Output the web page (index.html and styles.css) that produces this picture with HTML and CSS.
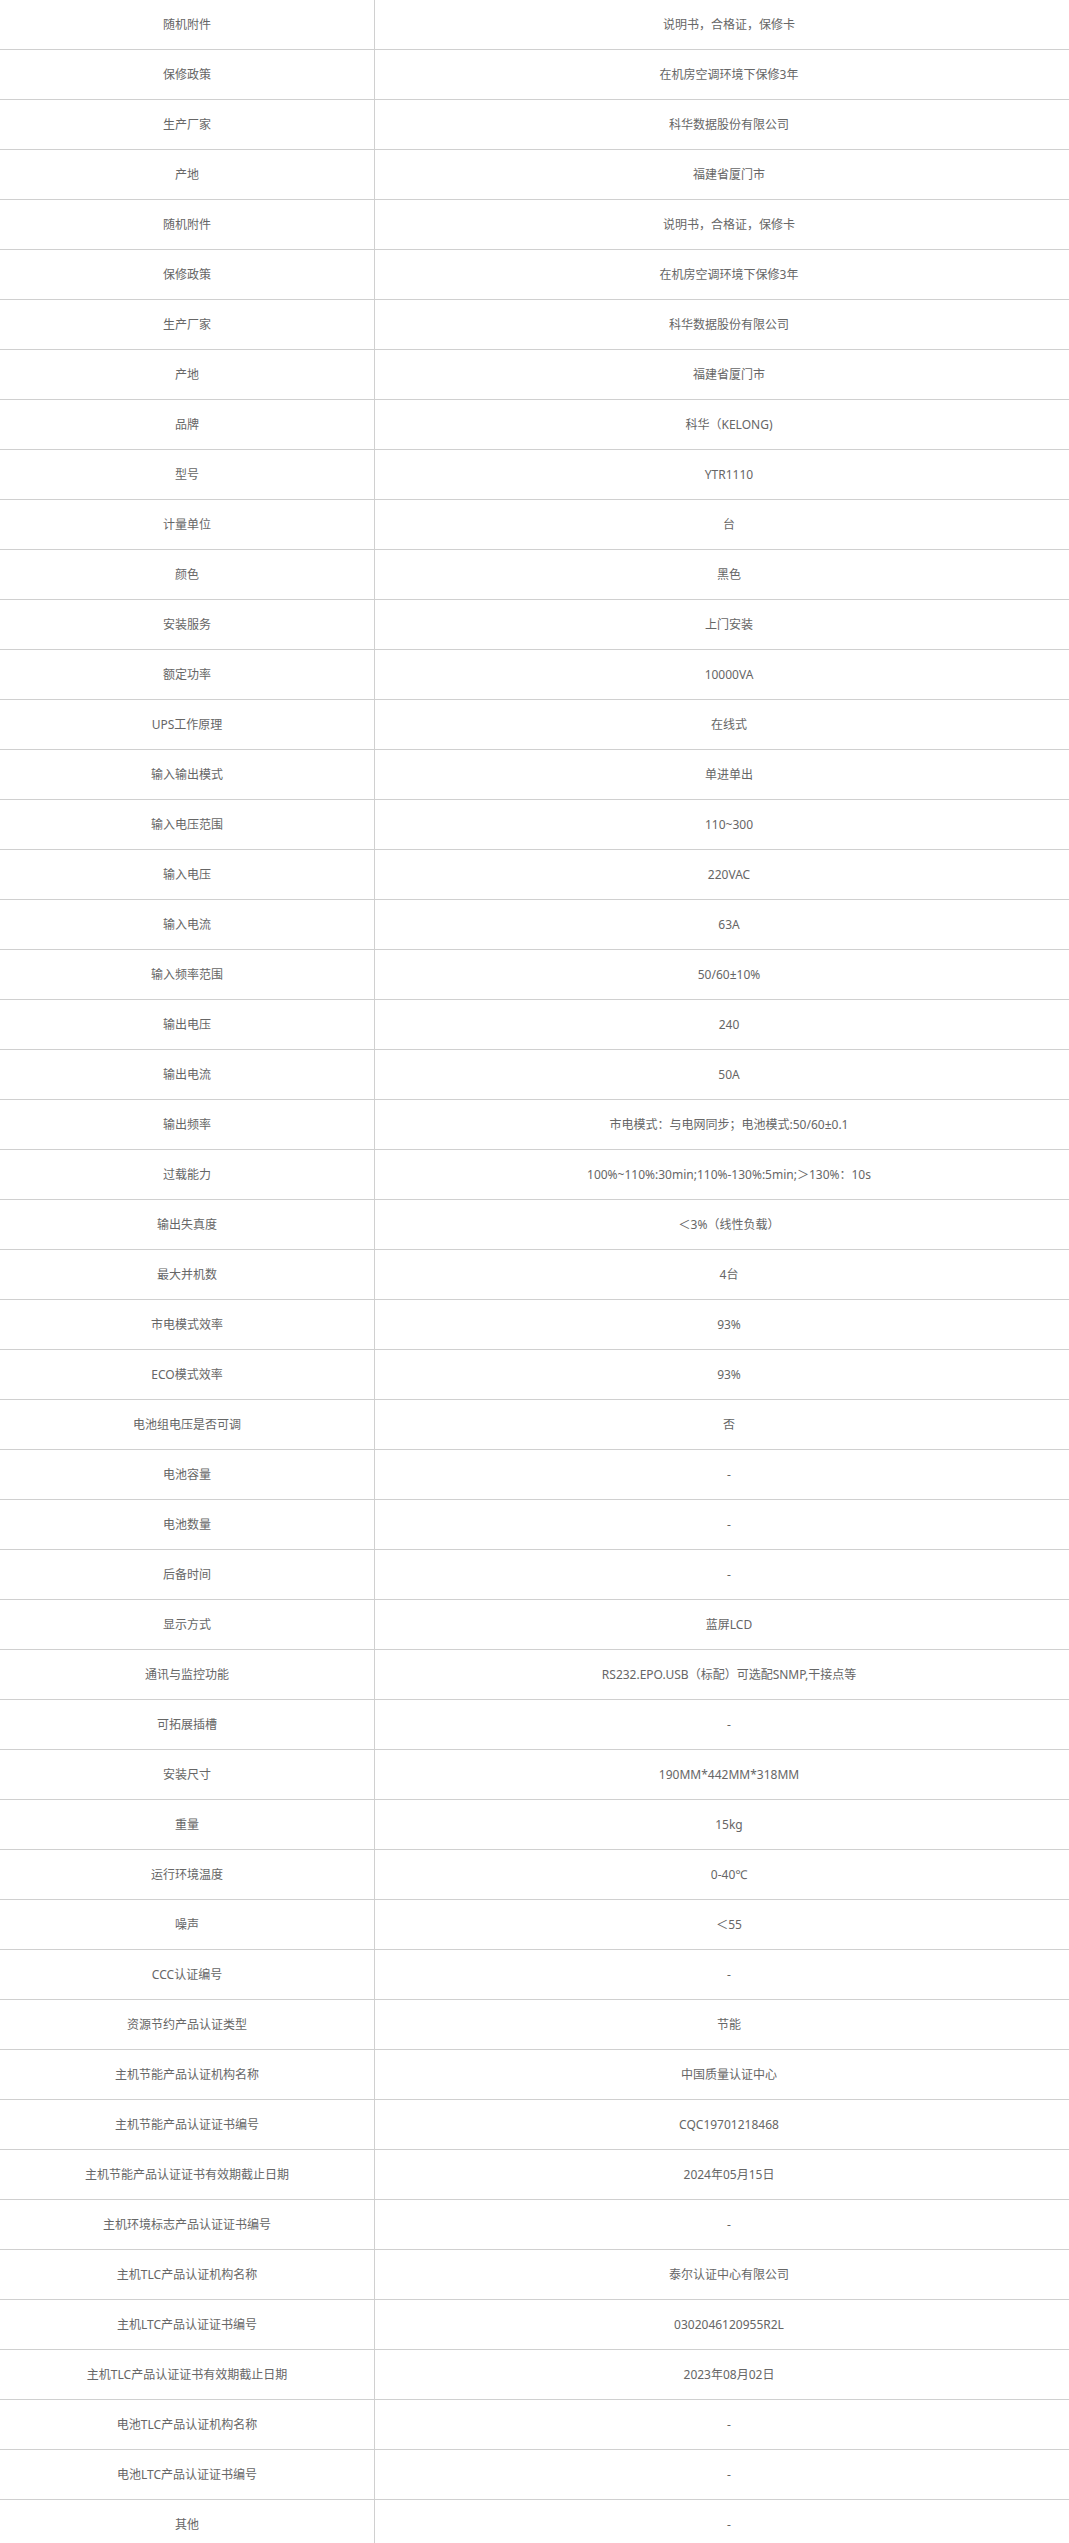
FILE: index.html
```html
<!DOCTYPE html>
<html lang="zh-CN">
<head>
<meta charset="utf-8">
<title>规格参数</title>
<link rel="stylesheet" href="styles.css">
</head>
<body>
<div class="wrap">
<div class="spec">
<div class="row"><div class="k">随机附件</div><div class="v">说明书，合格证，保修卡</div></div>
<div class="row"><div class="k">保修政策</div><div class="v">在机房空调环境下保修3年</div></div>
<div class="row"><div class="k">生产厂家</div><div class="v">科华数据股份有限公司</div></div>
<div class="row"><div class="k">产地</div><div class="v">福建省厦门市</div></div>
<div class="row"><div class="k">随机附件</div><div class="v">说明书，合格证，保修卡</div></div>
<div class="row"><div class="k">保修政策</div><div class="v">在机房空调环境下保修3年</div></div>
<div class="row"><div class="k">生产厂家</div><div class="v">科华数据股份有限公司</div></div>
<div class="row"><div class="k">产地</div><div class="v">福建省厦门市</div></div>
<div class="row"><div class="k">品牌</div><div class="v">科华（KELONG)</div></div>
<div class="row"><div class="k">型号</div><div class="v">YTR1110</div></div>
<div class="row"><div class="k">计量单位</div><div class="v">台</div></div>
<div class="row"><div class="k">颜色</div><div class="v">黑色</div></div>
<div class="row"><div class="k">安装服务</div><div class="v">上门安装</div></div>
<div class="row"><div class="k">额定功率</div><div class="v">10000VA</div></div>
<div class="row"><div class="k">UPS工作原理</div><div class="v">在线式</div></div>
<div class="row"><div class="k">输入输出模式</div><div class="v">单进单出</div></div>
<div class="row"><div class="k">输入电压范围</div><div class="v">110~300</div></div>
<div class="row"><div class="k">输入电压</div><div class="v">220VAC</div></div>
<div class="row"><div class="k">输入电流</div><div class="v">63A</div></div>
<div class="row"><div class="k">输入频率范围</div><div class="v">50/60±10%</div></div>
<div class="row"><div class="k">输出电压</div><div class="v">240</div></div>
<div class="row"><div class="k">输出电流</div><div class="v">50A</div></div>
<div class="row"><div class="k">输出频率</div><div class="v">市电模式：与电网同步；电池模式:50/60±0.1</div></div>
<div class="row"><div class="k">过载能力</div><div class="v">100%~110%:30min;110%-130%:5min;＞130%：10s</div></div>
<div class="row"><div class="k">输出失真度</div><div class="v">＜3%（线性负载）</div></div>
<div class="row"><div class="k">最大并机数</div><div class="v">4台</div></div>
<div class="row"><div class="k">市电模式效率</div><div class="v">93%</div></div>
<div class="row"><div class="k">ECO模式效率</div><div class="v">93%</div></div>
<div class="row"><div class="k">电池组电压是否可调</div><div class="v">否</div></div>
<div class="row"><div class="k">电池容量</div><div class="v">-</div></div>
<div class="row"><div class="k">电池数量</div><div class="v">-</div></div>
<div class="row"><div class="k">后备时间</div><div class="v">-</div></div>
<div class="row"><div class="k">显示方式</div><div class="v">蓝屏LCD</div></div>
<div class="row"><div class="k">通讯与监控功能</div><div class="v">RS232.EPO.USB（标配）可选配SNMP,干接点等</div></div>
<div class="row"><div class="k">可拓展插槽</div><div class="v">-</div></div>
<div class="row"><div class="k">安装尺寸</div><div class="v">190MM*442MM*318MM</div></div>
<div class="row"><div class="k">重量</div><div class="v">15kg</div></div>
<div class="row"><div class="k">运行环境温度</div><div class="v">0-40℃</div></div>
<div class="row"><div class="k">噪声</div><div class="v">＜55</div></div>
<div class="row"><div class="k">CCC认证编号</div><div class="v">-</div></div>
<div class="row"><div class="k">资源节约产品认证类型</div><div class="v">节能</div></div>
<div class="row"><div class="k">主机节能产品认证机构名称</div><div class="v">中国质量认证中心</div></div>
<div class="row"><div class="k">主机节能产品认证证书编号</div><div class="v">CQC19701218468</div></div>
<div class="row"><div class="k">主机节能产品认证证书有效期截止日期</div><div class="v">2024年05月15日</div></div>
<div class="row"><div class="k">主机环境标志产品认证证书编号</div><div class="v">-</div></div>
<div class="row"><div class="k">主机TLC产品认证机构名称</div><div class="v">泰尔认证中心有限公司</div></div>
<div class="row"><div class="k">主机LTC产品认证证书编号</div><div class="v">0302046120955R2L</div></div>
<div class="row"><div class="k">主机TLC产品认证证书有效期截止日期</div><div class="v">2023年08月02日</div></div>
<div class="row"><div class="k">电池TLC产品认证机构名称</div><div class="v">-</div></div>
<div class="row"><div class="k">电池LTC产品认证证书编号</div><div class="v">-</div></div>
<div class="row"><div class="k">其他</div><div class="v">-</div></div>
</div>
</div>
</body>
</html>
```
FILE: styles.css
```css
html, body {
  margin: 0;
  padding: 0;
  background: #fff;
  overflow-x: hidden;
}
body {
  font-family: "Noto Sans", "Noto Sans CJK SC", sans-serif;
  font-size: 12px;
  color: #666;
}
.wrap {
  width: 100%;
  overflow: hidden;
}
.spec {
  width: 1083px;
  margin-top: -1px;
}
.row {
  display: grid;
  grid-template-columns: 375px 708px;
  height: 50px;
  box-sizing: border-box;
  border-bottom: 1px solid #d0d0d0;
}
.row:first-child {
  border-top: 1px solid #d0d0d0;
  height: 51px;
}
.k, .v {
  display: flex;
  align-items: center;
  justify-content: center;
  text-align: center;
  line-height: 16px;
}
.k {
  border-right: 1px solid #d0d0d0;
}
```
